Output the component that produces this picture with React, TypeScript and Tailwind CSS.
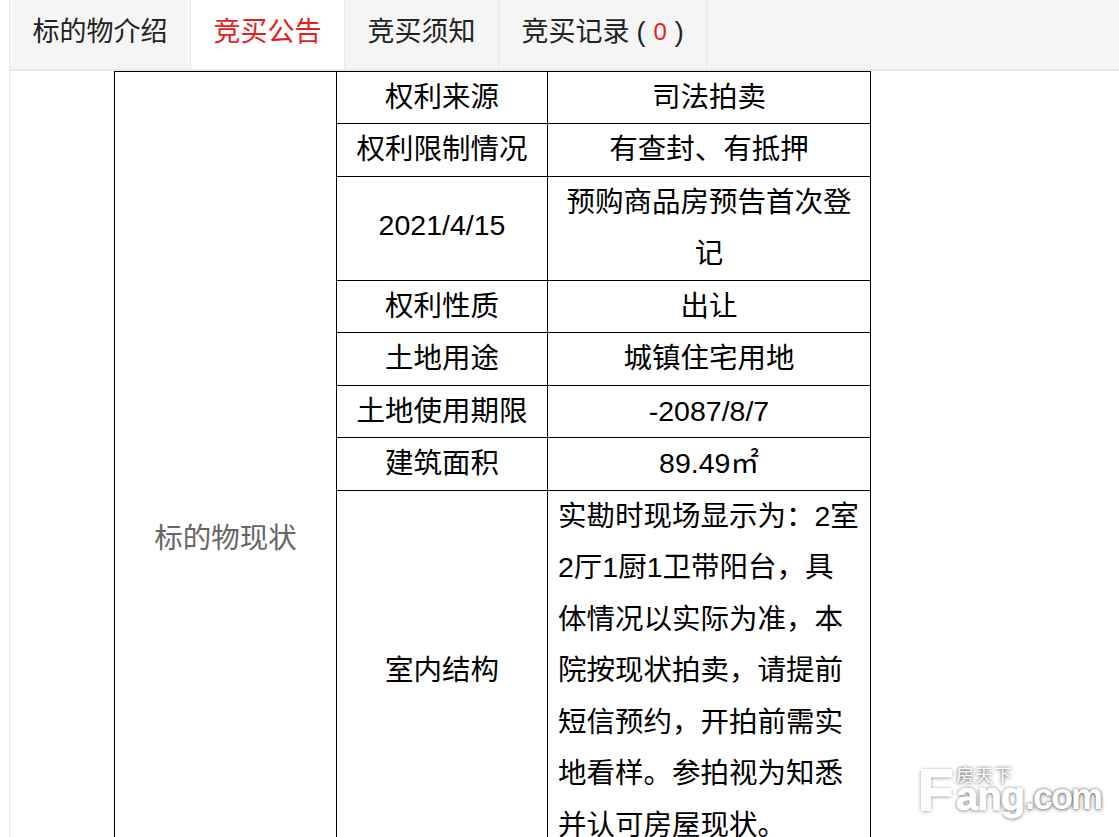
const rows: [string, string][] = [
  ["权利来源", "司法拍卖"],
  ["权利限制情况", "有查封、有抵押"],
  ["2021/4/15", "预购商品房预告首次登记"],
  ["权利性质", "出让"],
  ["土地用途", "城镇住宅用地"],
  ["土地使用期限", "-2087/8/7"],
  ["建筑面积", "89.49㎡"],
];

const tabClass = "h-full flex items-center px-[22.5px] pb-1 border-r border-[#e8e8e8]";

export default function App() {
  return (
    <div className="relative h-[837px] w-[1119px] overflow-hidden bg-white font-['Liberation_Sans','Noto_Sans_CJK_SC',sans-serif] text-black">
      <div className="ml-[9px] h-full border-l border-[#e8e8e8]">
        <div className="flex h-[70.6px] border-b-2 border-[#e8e8e8] bg-[#f5f5f5] text-[27px] text-[#222]">
          <div className={tabClass}>标的物介绍</div>
          <div className={`${tabClass} bg-white text-[#e4201c]`}>竞买公告</div>
          <div className={tabClass}>竞买须知</div>
          <div className={tabClass}>
            竞买记录<span className="ml-[7px]">(</span>
            <span className="mx-2 text-[24px] text-[#e4201c]">0</span>)
          </div>
        </div>
        <table className="ml-[104px] w-[756px] table-fixed border-collapse text-center text-[28.5px] leading-[51.5px]">
          <colgroup>
            <col className="w-[222px]" />
            <col className="w-[211px]" />
            <col className="w-[323px]" />
          </colgroup>
          <tbody>
            {rows.map(([name, value], i) => (
              <tr key={name}>
                {i === 0 && (
                  <td rowSpan={8} className="border border-black pt-[154px] text-[#666]">
                    标的物现状
                  </td>
                )}
                <td className={i === 2 ? "border border-black pb-1" : "border border-black"}>{name}</td>
                <td className="border border-black px-[10px]">{value}</td>
              </tr>
            ))}
            <tr>
              <td className="border border-black">室内结构</td>
              <td className="border border-black px-[10px] text-left">
                实勘时现场显示为：2室2厅1厨1卫带阳台，具体情况以实际为准，本院按现状拍卖，请提前短信预约，开拍前需实地看样。参拍视为知悉并认可房屋现状。
              </td>
            </tr>
          </tbody>
        </table>
      </div>
      {/* watermark */}
      <div className="absolute left-[918px] top-0 h-full w-[190px] text-white [text-shadow:0_0_3px_rgba(0,0,0,0.55),0_1px_4px_rgba(0,0,0,0.4)]">
        <span className="absolute left-[38px] top-[767px] text-[18px] leading-none tracking-[1px]">房天下</span>
        <span className="absolute left-0 top-[761px] text-[58px] font-bold leading-none [-webkit-text-stroke:2px_white]">F</span>
        <span className="absolute left-[38px] top-[776px] text-[40px] font-bold leading-none tracking-[-1px] [-webkit-text-stroke:1px_white]">ang</span>
        <span className="absolute left-[107px] top-[779px] text-[36px] font-bold leading-none tracking-[-2px]">.com</span>
      </div>
    </div>
  );
}
